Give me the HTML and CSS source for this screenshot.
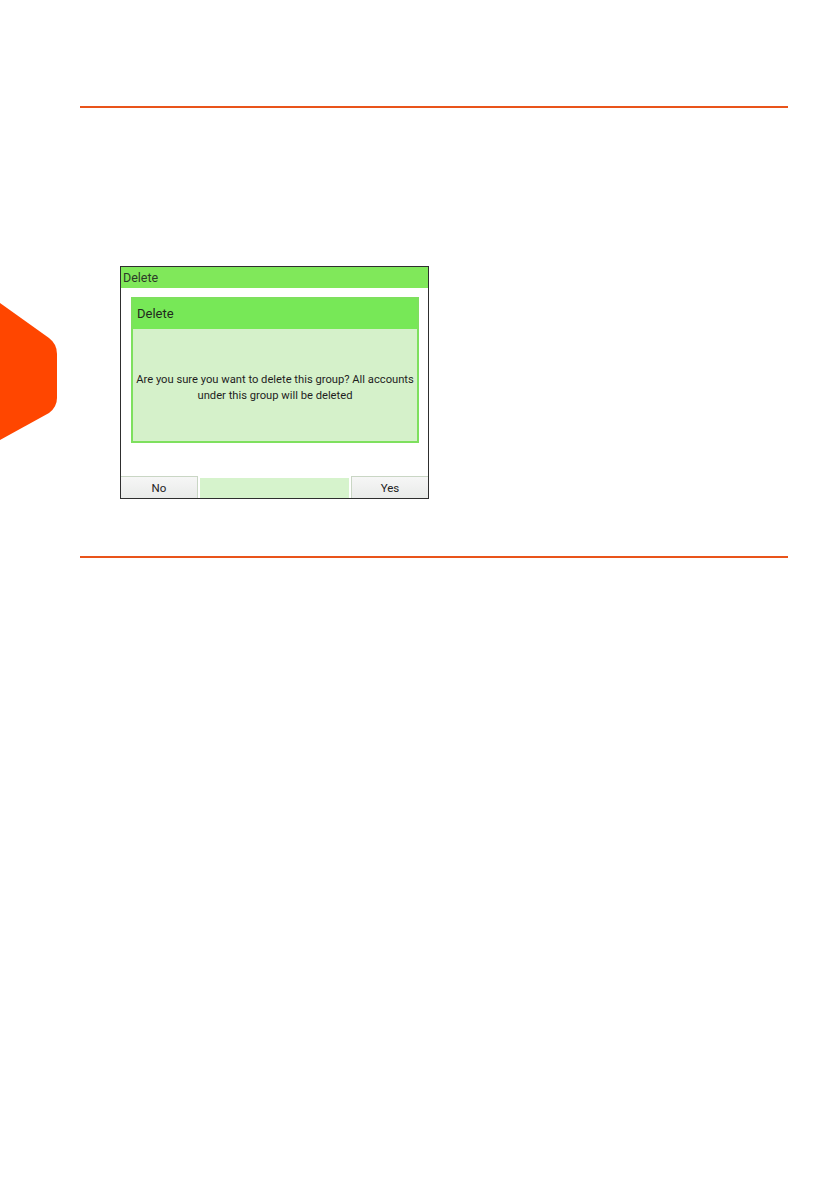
FILE: index.html
```html
<!DOCTYPE html>
<html>
<head>
<meta charset="utf-8">
<link rel="stylesheet" href="styles.css">
</head>
<body>
<div class="tab">
  <svg width="60" height="140" viewBox="0 0 60 140"><path d="M0 0 L49 35 Q57 41 57 51 L57 95 Q57 104 49 110 L0 137 Z" fill="#ff4600"/></svg>
</div>
<div class="page">
  <div class="rule rule-top"></div>
  <div class="shot">
    <div class="titlebar">Delete</div>
    <div class="dialog">
      <div class="dialog-head">Delete</div>
      <div class="dialog-body">
        <p>Are you sure you want to delete this group? All accounts<br>under this group will be deleted</p>
      </div>
    </div>
    <div class="buttons">
      <div class="btn">No</div>
      <div class="btn-gap"></div>
      <div class="btn">Yes</div>
    </div>
  </div>
  <div class="rule rule-bottom"></div>
</div>
</body>
</html>
```
FILE: styles.css
```css
html, body {
  margin: 0;
  padding: 0;
  background: #ffffff;
}
body {
  font-family: Roboto, "Liberation Sans", sans-serif;
  position: relative;
  height: 1191px;
}
.tab {
  position: absolute;
  left: 0;
  top: 303px;
  line-height: 0;
}
.page {
  padding: 106px 0 0 80px;
  width: 708px;
}
.rule {
  height: 2px;
  background: #e9541a;
}
.shot {
  margin: 158px 0 0 40px;
  width: 307px;
  height: 231px;
  border: 1px solid #2e2e2e;
  display: flex;
  flex-direction: column;
  background: #ffffff;
}
.titlebar {
  height: 21px;
  background: #80e85a;
  color: #2c3a28;
  font-size: 12.5px;
  line-height: 22px;
  padding-left: 2px;
}
.dialog {
  margin: 9px 9px 0 10px;
  height: 142px;
  border: 2px solid #7ee05e;
  display: flex;
  flex-direction: column;
}
.dialog-head {
  height: 30px;
  background: #77e857;
  color: #1f2a1c;
  font-size: 13px;
  line-height: 30px;
  padding-left: 4px;
}
.dialog-body {
  flex: 1;
  background: #d5f1ca;
  display: flex;
  align-items: center;
  justify-content: center;
}
.dialog-body p {
  margin: 5px 0 0 0;
  font-size: 11.2px;
  line-height: 16px;
  text-align: center;
  color: #1e1e1e;
}
.buttons {
  margin-top: auto;
  height: 22px;
  display: flex;
}
.btn {
  width: 76px;
  height: 21px;
  border-top: 1px solid #c9d6c4;
  background: linear-gradient(#f6f6f6, #e9ebe9);
  color: #222;
  font-size: 11.5px;
  line-height: 22px;
  text-align: center;
}
.btn:first-child {
  border-right: 1px solid #c9d6c4;
}
.btn:last-child {
  border-left: 1px solid #c9d6c4;
}
.btn-gap {
  flex: 1;
  margin: 2px 2px 0 2px;
  background: #d6f3cc;
}
.rule-bottom {
  margin-top: 57px;
}
```
